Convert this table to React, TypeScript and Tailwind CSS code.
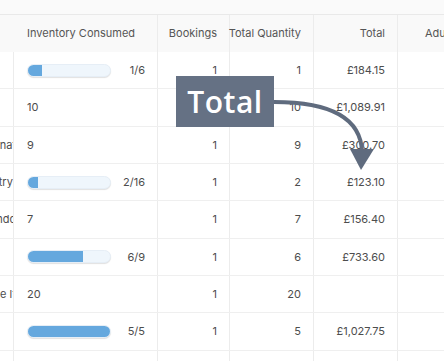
import React from "react";

type Row = {
  left: string;
  inv: { kind: "bar"; used: number; total: number } | { kind: "num"; value: string };
  bookings: string;
  qty: string;
  total: string;
};

const rows: Row[] = [
  { left: "", inv: { kind: "bar", used: 1, total: 6 }, bookings: "1", qty: "1", total: "£184.15" },
  { left: "", inv: { kind: "num", value: "10" }, bookings: "1", qty: "10", total: "£1,089.91" },
  { left: "Marinat", inv: { kind: "num", value: "9" }, bookings: "1", qty: "9", total: "£300.70" },
  { left: "Pastry:", inv: { kind: "bar", used: 2, total: 16 }, bookings: "1", qty: "2", total: "£123.10" },
  { left: "Windo", inv: { kind: "num", value: "7" }, bookings: "1", qty: "7", total: "£156.40" },
  { left: "", inv: { kind: "bar", used: 6, total: 9 }, bookings: "1", qty: "6", total: "£733.60" },
  { left: "Coffee lt", inv: { kind: "num", value: "20" }, bookings: "1", qty: "20", total: "" },
  { left: "", inv: { kind: "bar", used: 5, total: 5 }, bookings: "1", qty: "5", total: "£1,027.75" },
  { left: "", inv: { kind: "num", value: "" }, bookings: "", qty: "", total: "" },
];

const grid = "grid grid-cols-[14px_144px_72px_84px_84px_1fr]";

export default function App() {
  return (
    <div
      className="relative w-[444px] h-[361px] overflow-hidden bg-white text-[11px] text-[#4d4d4d]"
      style={{ fontFamily: "Inter, 'Noto Sans', sans-serif" }}
    >
      <div className="h-[15px] bg-[#fafafa] border-b border-[#e9e9e9]" />
      {/* header */}
      <div className={`${grid} h-[37px] bg-[#f9f9f9] text-[#555]`}>
        <div />
        <div className="flex items-center pl-[13px] border-r border-[#ececec]">Inventory Consumed</div>
        <div className="flex items-center justify-end pr-[12px] border-r border-[#ececec]">Bookings</div>
        <div className="flex items-center justify-end pr-[12px] border-r border-[#ececec] whitespace-nowrap">Total Quantity</div>
        <div className="flex items-center justify-end pr-[12px] border-r border-[#ececec]">Total</div>
        <div className="flex items-center pl-[27px] overflow-hidden whitespace-nowrap">Adults</div>
      </div>
      {/* body */}
      {rows.map((r, i) => (
        <div key={i} className={`${grid} h-[37.33px] border-b border-[#efefef]`}>
          <div className="flex items-center justify-end overflow-hidden border-r border-[#ececec]">
            <span className="whitespace-nowrap mr-[-3px]">{r.left}</span>
          </div>
          <div className="flex items-center pl-[13px] pr-[12px] border-r border-[#ececec]">
            {r.inv.kind === "bar" ? (
              <>
                <div className="w-[84px] h-[13px] rounded-full bg-[#eff6fc] shadow-[0_1px_1px_rgba(0,0,0,0.12)] border border-[#e6eef6] overflow-hidden">
                  <div
                    className="h-full bg-[#65a8de]"
                    style={{ width: `${(r.inv.used / r.inv.total) * 100}%` }}
                  />
                </div>
                <span className="ml-auto">
                  {r.inv.used}/{r.inv.total}
                </span>
              </>
            ) : (
              <span>{r.inv.value}</span>
            )}
          </div>
          <div className="flex items-center justify-end pr-[12px] border-r border-[#ececec]">{r.bookings}</div>
          <div className="flex items-center justify-end pr-[12px] border-r border-[#ececec]">{r.qty}</div>
          <div className="flex items-center justify-end pr-[12px] border-r border-[#ececec]">{r.total}</div>
          <div />
        </div>
      ))}

      {/* annotation */}
      <div
        className="absolute left-[176px] top-[76px] w-[98px] h-[51px] bg-[#657184] flex items-center justify-center text-white text-[30px] font-semibold tracking-[0.5px]"
        style={{ fontFamily: "'Open Sans', sans-serif" }}
      >
        Total
      </div>
      <svg className="absolute left-0 top-0" width="444" height="361" viewBox="0 0 444 361">
        <path d="M274 102 C 330 102, 361 118, 362 152" fill="none" stroke="#5f6b7e" strokeWidth="4" />
        <polygon points="350,149 374,149 361,170" fill="#5f6b7e" />
      </svg>
    </div>
  );
}
